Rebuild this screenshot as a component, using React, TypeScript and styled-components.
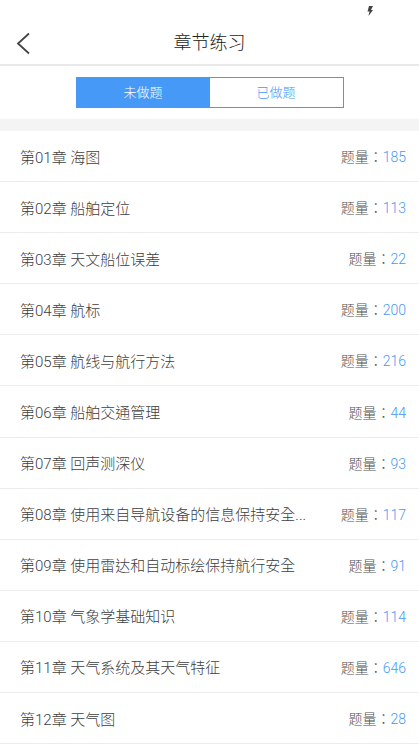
import React, { useState } from "react";
import styled, { createGlobalStyle } from "styled-components";

const GlobalStyle = createGlobalStyle`
  html, body {
    margin: 0;
    padding: 0;
    background: #ffffff;
  }
  body {
    font-family: Roboto, "Noto Sans CJK TC", "Noto Sans", sans-serif;
  }
  * { box-sizing: border-box; }
`;

const BLUE = "#4699f6";
const FONT = `Roboto, "Noto Sans CJK TC", "Noto Sans CJK SC", sans-serif`;

const Page = styled.div`
  width: 419px;
  min-height: 744px;
  background: #ffffff;
  overflow: hidden;
`;

const StatusBar = styled.div`
  height: 22px;
  display: flex;
  justify-content: flex-end;
  align-items: flex-start;
  padding: 6px 46px 0 0;
`;

const Header = styled.header`
  position: relative;
  height: 44px;
  display: flex;
  align-items: center;
  justify-content: center;
  border-bottom: 2px solid #e9e9e9;
`;

const BackButton = styled.button`
  position: absolute;
  left: 12px;
  top: 9px;
  width: 22px;
  height: 24px;
  padding: 0;
  border: none;
  background: transparent;
  display: flex;
  align-items: center;
  justify-content: center;
`;

const Title = styled.h1`
  margin: 0;
  font-family: ${FONT};
  font-size: 18px;
  font-weight: 300;
  color: #222222;
  line-height: 1;
`;

const TabArea = styled.div`
  height: 53px;
  display: flex;
  align-items: center;
  justify-content: center;
`;

const TabGroup = styled.div`
  display: flex;
  width: 268px;
  height: 31px;
  border: 1px solid ${BLUE};
  background: ${BLUE};
  gap: 0;
`;

const Tab = styled.button<{ $active: boolean }>`
  flex: 1;
  padding: 0;
  margin: 0;
  border: none;
  outline: none;
  background: ${(p) => (p.$active ? BLUE : "#ffffff")};
  color: ${(p) => (p.$active ? "#ffffff" : BLUE)};
  font-family: ${FONT};
  font-size: 13px;
  font-weight: 300;
  line-height: 1;
  cursor: pointer;
`;

const Gap = styled.div`
  height: 12px;
  background: #f4f4f4;
`;

const List = styled.ul`
  margin: 0;
  padding: 0;
  list-style: none;
`;

const Row = styled.li`
  height: 51.1px;
  display: flex;
  align-items: center;
  padding: 0 13px 0 20px;
  border-bottom: 1px solid #ececec;
`;

const ChapterName = styled.span`
  flex: 1;
  min-width: 0;
  margin-right: 20px;
  font-family: ${FONT};
  font-size: 15px;
  font-weight: 300;
  color: #404040;
  white-space: nowrap;
  overflow: hidden;
  text-overflow: ellipsis;
`;

const Count = styled.span`
  flex-shrink: 0;
  font-family: ${FONT};
  font-size: 14px;
  font-weight: 300;
  color: #505050;
  white-space: nowrap;
`;

const Num = styled.span`
  color: ${BLUE};
`;

const chapters: [string, number][] = [
  ["第01章 海图", 185],
  ["第02章 船舶定位", 113],
  ["第03章 天文船位误差", 22],
  ["第04章 航标", 200],
  ["第05章 航线与航行方法", 216],
  ["第06章 船舶交通管理", 44],
  ["第07章 回声测深仪", 93],
  ["第08章 使用来自导航设备的信息保持安全...", 117],
  ["第09章 使用雷达和自动标绘保持航行安全", 91],
  ["第10章 气象学基础知识", 114],
  ["第11章 天气系统及其天气特征", 646],
  ["第12章 天气图", 28],
];

export default function App() {
  const [tab, setTab] = useState(0);
  return (
    <>
      <GlobalStyle />
      <Page>
        <StatusBar>
          <svg width="6" height="10" viewBox="0 0 6 10">
            <path d="M2 0 L6 0 L4 4 L6 4 L1.5 10 L2.5 5.5 L0.5 5.5 Z" fill="#444" />
          </svg>
        </StatusBar>
        <Header>
          <BackButton aria-label="返回">
            <svg width="16" height="23" viewBox="0 0 16 23">
              <path d="M14 1.5 L3 11.5 L14 21.5" fill="none" stroke="#444" strokeWidth="1.8" />
            </svg>
          </BackButton>
          <Title>章节练习</Title>
        </Header>
        <TabArea>
          <TabGroup>
            <Tab $active={tab === 0} onClick={() => setTab(0)}>未做题</Tab>
            <Tab $active={tab === 1} onClick={() => setTab(1)}>已做题</Tab>
          </TabGroup>
        </TabArea>
        <Gap />
        <List>
          {chapters.map(([name, n]) => (
            <Row key={name}>
              <ChapterName>{name}</ChapterName>
              <Count>
                题量：<Num>{n}</Num>
              </Count>
            </Row>
          ))}
        </List>
      </Page>
    </>
  );
}
